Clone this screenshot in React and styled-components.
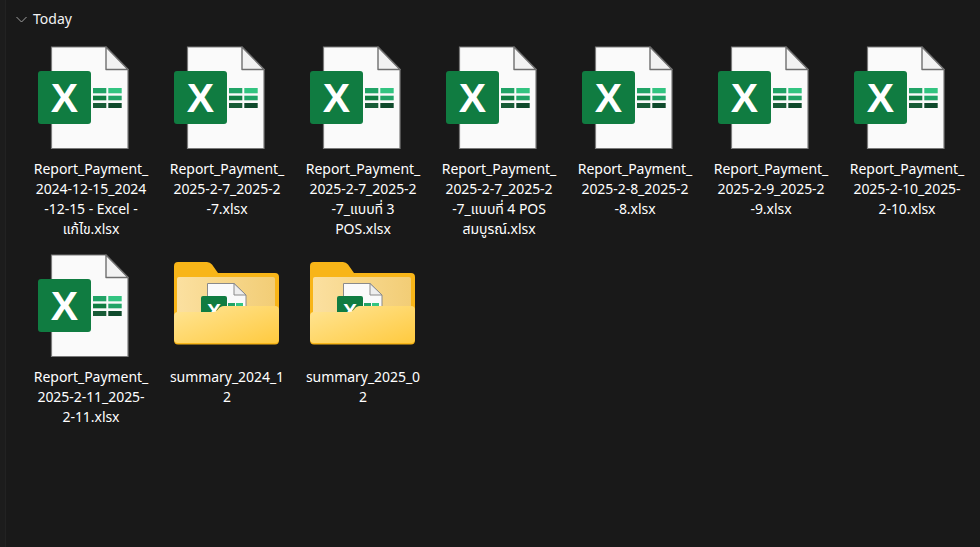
import styled, { createGlobalStyle } from "styled-components";

const GlobalStyle = createGlobalStyle`
  html, body {
    margin: 0;
    height: 100%;
    background: #191919;
    overflow: hidden;
  }
`;

const files = [
  { type: "excel", lines: ["Report_Payment_", "2024-12-15_2024", "-12-15 - Excel -", "แก้ไข.xlsx"] },
  { type: "excel", lines: ["Report_Payment_", "2025-2-7_2025-2", "-7.xlsx"] },
  { type: "excel", lines: ["Report_Payment_", "2025-2-7_2025-2", "-7_แบบที่ 3", "POS.xlsx"] },
  { type: "excel", lines: ["Report_Payment_", "2025-2-7_2025-2", "-7_แบบที่ 4 POS", "สมบูรณ์.xlsx"] },
  { type: "excel", lines: ["Report_Payment_", "2025-2-8_2025-2", "-8.xlsx"] },
  { type: "excel", lines: ["Report_Payment_", "2025-2-9_2025-2", "-9.xlsx"] },
  { type: "excel", lines: ["Report_Payment_", "2025-2-10_2025-", "2-10.xlsx"] },
  { type: "excel", lines: ["Report_Payment_", "2025-2-11_2025-", "2-11.xlsx"] },
  { type: "folder", lines: ["summary_2024_1", "2"] },
  { type: "folder", lines: ["summary_2025_0", "2"] },
];

const ExcelIcon = () => (
  <svg width="106" height="104" viewBox="0 0 106 104">
    <path d="M13.5 1 H68 L90 23.5 V102.5 H13.5 Z" fill="#fafafa" stroke="#7a7a7a" strokeWidth="1.2" />
    <path d="M68 1 V23.5 H90 Z" fill="#f2f2f2" stroke="#6f6f6f" strokeWidth="1.4" strokeLinejoin="round" />
    <rect x="0" y="25" width="53" height="53" rx="3" fill="#107c41" />
    <text x="26.5" y="66" textAnchor="middle" fontFamily="Liberation Sans, sans-serif" fontWeight="700" fontSize="41" fill="#ffffff">X</text>
    <rect x="55" y="42" width="13.3" height="5.3" fill="#21a366" />
    <rect x="70.3" y="42" width="13.4" height="5.3" fill="#33c481" />
    <rect x="55" y="49.7" width="13.3" height="4.6" fill="#107c41" />
    <rect x="70.3" y="49.7" width="13.4" height="4.6" fill="#21a366" />
    <rect x="55" y="57" width="13.3" height="5" fill="#185c37" />
    <rect x="70.3" y="57" width="13.4" height="5" fill="#0f4a2c" />
  </svg>
);

const FolderIcon = ({ id }) => (
  <svg width="106" height="104" viewBox="0 0 106 104">
    <defs>
      <linearGradient id={`front-${id}`} x1="0" y1="0" x2="1" y2="1">
        <stop offset="0" stopColor="#ffe596" />
        <stop offset="1" stopColor="#ffca3f" />
      </linearGradient>
      <linearGradient id={`sheet-${id}`} x1="0" y1="0" x2="1" y2="0">
        <stop offset="0" stopColor="#fbe0a0" />
        <stop offset="1" stopColor="#f2cd76" />
      </linearGradient>
    </defs>
    <path d="M4 8 H33 Q36 8 38 10.5 L44 19 H101 Q105 19 105 23 V86 Q105 90.5 101 90.5 H4 Q0 90.5 0 86 V12 Q0 8 4 8 Z" fill="#f8b518" />
    <rect x="3" y="23" width="98" height="50" rx="2" fill={`url(#sheet-${id})`} />
    <path d="M33.5 29.5 H60 L72 41 V70 H33.5 Z" fill="#fafafa" stroke="#8a8a8a" strokeWidth="1" />
    <path d="M60 29.5 V41 H72 Z" fill="#eeeeee" stroke="#8a8a8a" strokeWidth="1" />
    <rect x="27" y="42" width="26" height="30" rx="2" fill="#107c41" />
    <text x="40" y="64" textAnchor="middle" fontFamily="Liberation Sans, sans-serif" fontWeight="700" fontSize="21" fill="#ffffff">X</text>
    <rect x="54" y="49" width="7" height="6" fill="#21a366" />
    <rect x="62" y="49" width="7" height="6" fill="#33c481" />
    <path d="M4 58 H39 Q42 58 44 55.5 Q46 52 50 52 H101 Q105 52 105 56 V85 Q105 89 101 89 H4 Q0 89 0 85 V62 Q0 58 4 58 Z" fill={`url(#front-${id})`} />
  </svg>
);

const App = () => (
  <Window>
    <GlobalStyle />
    <Rail />
    <Content>
      <GroupHeader>
        <Chevron width="12" height="7" viewBox="0 0 12 7">
          <path d="M0.5 1 L5.5 6 L10.5 1" fill="none" stroke="#a0a0a0" strokeWidth="1" />
        </Chevron>
        <GroupTitle>Today</GroupTitle>
      </GroupHeader>
      <FileGrid>
        {files.map((file, i) => (
          <FileItem key={i}>
            <IconSlot>{file.type === "excel" ? <ExcelIcon /> : <FolderIcon id={i} />}</IconSlot>
            <FileName>
              {file.lines.map((line, j) => (
                <span key={j}>{line}</span>
              ))}
            </FileName>
          </FileItem>
        ))}
      </FileGrid>
    </Content>
  </Window>
);

export default App;

const Window = styled.div`
  display: flex;
  width: 980px;
  height: 547px;
  background: #191919;
  overflow: hidden;
  font-family: "Noto Sans", "Noto Sans Thai", "Open Sans", sans-serif;
  color: #ffffff;
`;

const Rail = styled.div`
  width: 5px;
  flex-shrink: 0;
  background: #1c1c1c;
  border-right: 1px solid #222222;
`;

const Content = styled.div`
  flex: 1;
  padding: 8px 0 0 10px;
`;

const GroupHeader = styled.div`
  display: flex;
  align-items: center;
  gap: 5px;
  height: 20px;
  margin-bottom: 18px;
`;

const Chevron = styled.svg`
  margin-top: 2px;
`;

const GroupTitle = styled.span`
  font-size: 14px;
  color: #f2f2f2;
`;

const FileGrid = styled.div`
  display: grid;
  grid-template-columns: repeat(7, 136px);
  grid-auto-rows: 208px;
  margin-left: 7px;
`;

const FileItem = styled.div`
  display: flex;
  flex-direction: column;
  align-items: center;
`;

const IconSlot = styled.div`
  height: 104px;
  margin-bottom: 9px;
  svg {
    display: block;
  }
`;

const FileName = styled.div`
  font-size: 14px;
  letter-spacing: -0.05px;
  line-height: 20px;
  text-align: center;
  white-space: nowrap;
  color: #ffffff;

  span {
    display: block;
  }
`;
